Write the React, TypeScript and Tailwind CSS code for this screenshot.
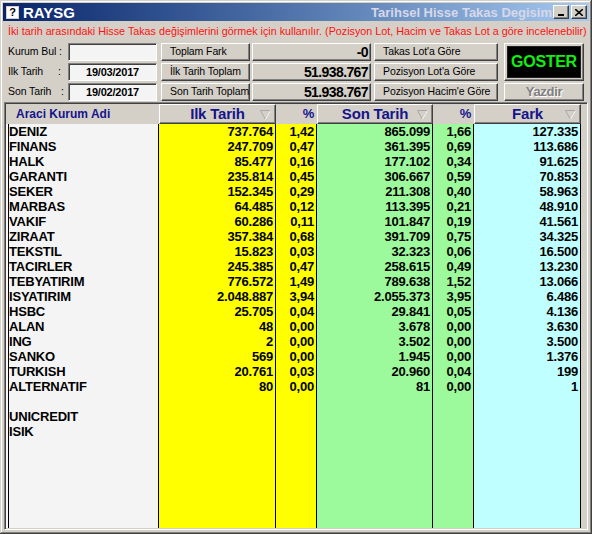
import React from 'react';

const raised =
  'border border-t-white border-l-white border-r-[#404040] border-b-[#404040] shadow-[inset_-1px_-1px_#808080]';
const sunken =
  'border border-t-[#808080] border-l-[#808080] border-r-white border-b-white shadow-[inset_1px_1px_#404040]';

type Row = [string, string, string, string, string, string];

const rows: Row[] = [
  ['DENIZ', '737.764', '1,42', '865.099', '1,66', '127.335'],
  ['FINANS', '247.709', '0,47', '361.395', '0,69', '113.686'],
  ['HALK', '85.477', '0,16', '177.102', '0,34', '91.625'],
  ['GARANTI', '235.814', '0,45', '306.667', '0,59', '70.853'],
  ['SEKER', '152.345', '0,29', '211.308', '0,40', '58.963'],
  ['MARBAS', '64.485', '0,12', '113.395', '0,21', '48.910'],
  ['VAKIF', '60.286', '0,11', '101.847', '0,19', '41.561'],
  ['ZIRAAT', '357.384', '0,68', '391.709', '0,75', '34.325'],
  ['TEKSTIL', '15.823', '0,03', '32.323', '0,06', '16.500'],
  ['TACIRLER', '245.385', '0,47', '258.615', '0,49', '13.230'],
  ['TEBYATIRIM', '776.572', '1,49', '789.638', '1,52', '13.066'],
  ['ISYATIRIM', '2.048.887', '3,94', '2.055.373', '3,95', '6.486'],
  ['HSBC', '25.705', '0,04', '29.841', '0,05', '4.136'],
  ['ALAN', '48', '0,00', '3.678', '0,00', '3.630'],
  ['ING', '2', '0,00', '3.502', '0,00', '3.500'],
  ['SANKO', '569', '0,00', '1.945', '0,00', '1.376'],
  ['TURKISH', '20.761', '0,03', '20.960', '0,04', '199'],
  ['ALTERNATIF', '80', '0,00', '81', '0,00', '1'],
  ['', '', '', '', '', ''],
  ['UNICREDIT', '', '', '', '', ''],
  ['ISIK', '', '', '', '', ''],
];

function SortArrow() {
  return (
    <svg width="11" height="11" viewBox="0 0 11 11" className="absolute right-[4px] top-[4px]">
      <path d="M0.5 1.5 H10.5 L5.5 10.5 Z" fill="none" stroke="#a8a8a8" strokeWidth="1" />
      <path d="M10.5 1.5 L5.5 10.5" fill="none" stroke="#ffffff" strokeWidth="1" />
    </svg>
  );
}

function Column({
  title,
  index,
  width,
  bg,
  sort,
}: {
  title: string;
  index: number;
  width: string;
  bg: string;
  sort?: boolean;
}) {
  return (
    <div className={`flex flex-col ${width}`}>
      {sort ? (
        <div
          className={`relative h-[20px] ${raised} flex items-center justify-center text-[15px] font-bold text-[#14148c]`}
        >
          {title}
          <SortArrow />
        </div>
      ) : (
        <div className="h-[20px] flex items-center justify-end pr-[3px] text-[13px] font-bold text-[#14148c]">
          {title}
        </div>
      )}
      <div className={`flex-1 ${bg} border-r border-black`}>
        {rows.map((r, i) => (
          <div key={i} className="h-[15px] leading-[15px] text-right pr-[2px]">
            {r[index]}
          </div>
        ))}
      </div>
    </div>
  );
}

function ValueBox({ value }: { value: string }) {
  return (
    <div
      className={`h-[18px] ${raised} flex items-center justify-end pr-[2px] text-[14px] font-bold tracking-[-0.6px]`}
    >
      {value}
    </div>
  );
}

function Btn({ label }: { label: string }) {
  return (
    <div className={`h-[18px] ${raised} flex items-center pl-[8px] whitespace-nowrap overflow-hidden`}>
      {label}
    </div>
  );
}

export default function App() {
  return (
    <div className="w-[592px] h-[534px] bg-[#d4d0c8] p-[3px] pb-[4px] flex flex-col overflow-hidden font-['Liberation_Sans',Arial,sans-serif] text-black shadow-[inset_-1px_-1px_#404040,inset_1px_1px_#d4d0c8,inset_-2px_-2px_#808080,inset_2px_2px_#ffffff]">
      {/* title bar */}
      <div className="h-[18px] flex items-center bg-gradient-to-r from-[#0a246a] to-[#a6caf0] pl-[3px] pr-[2px]">
        <div className="w-[13px] h-[13px] bg-[#d4d0c8] flex items-center justify-center">
          <div className="w-[11px] h-[11px] bg-white flex items-center justify-center text-[11px] font-bold leading-none">
            ?
          </div>
        </div>
        <span className="ml-[4px] text-white font-bold text-[15px] leading-none">RAYSG</span>
        <span className="ml-auto pr-[1px] whitespace-nowrap text-[#d8d8e8] font-bold text-[13px] leading-none">
          Tarihsel Hisse Takas Degisim
        </span>
        <div className={`w-[16px] h-[14px] bg-[#d4d0c8] ${raised} flex items-end justify-center pb-[2px]`}>
          <div className="w-[6px] h-[2px] bg-black" />
        </div>
        <div className={`ml-[2px] w-[16px] h-[14px] bg-[#d4d0c8] ${raised} flex items-center justify-center`}>
          <svg width="8" height="7" viewBox="0 0 8 7">
            <path d="M0 0 L8 7 M8 0 L0 7" stroke="black" strokeWidth="1.6" />
          </svg>
        </div>
      </div>

      {/* info line */}
      <div className="mt-[3px] pl-[5px] h-[14px] leading-[14px] text-[10.75px] text-[#ff1010] whitespace-nowrap">
        İki tarih arasındaki Hisse Takas değişimlerini görmek için kullanılır. (Pozisyon Lot, Hacim ve Takas Lot a göre incelenebilir)
      </div>

      {/* controls */}
      <div className="mt-[5px] flex text-[10.5px] tracking-[-0.1px] pl-[5px]">
        <div className="w-[60px] flex flex-col gap-[2px]">
          <div className="h-[18px] flex items-center">Kurum Bul :</div>
          <div className="h-[18px] flex items-center">
            <span className="w-[50px]">Ilk Tarih</span>:
          </div>
          <div className="h-[18px] flex items-center">
            <span className="w-[53px]">Son Tarih</span>:
          </div>
        </div>
        <div className="w-[89px] flex flex-col gap-[2px]">
          <div className={`h-[18px] ${sunken} bg-[#f4f4f4]`} />
          <div className={`h-[18px] ${sunken} bg-[#f4f4f4] flex items-center justify-center text-[11px] font-bold tracking-[-0.2px]`}>
            19/03/2017
          </div>
          <div className={`h-[18px] ${sunken} bg-[#f4f4f4] flex items-center justify-center text-[11px] font-bold tracking-[-0.2px]`}>
            19/02/2017
          </div>
        </div>
        <div className="ml-[4px] w-[89px] flex flex-col gap-[2px]">
          <Btn label="Toplam Fark" />
          <Btn label="İlk Tarih Toplam" />
          <Btn label="Son Tarih Toplam" />
        </div>
        <div className="ml-[2px] w-[119px] flex flex-col gap-[2px]">
          <ValueBox value="-0" />
          <ValueBox value="51.938.767" />
          <ValueBox value="51.938.767" />
        </div>
        <div className="ml-[3px] w-[124px] flex flex-col gap-[2px]">
          <Btn label="Takas Lot'a Göre" />
          <Btn label="Pozisyon Lot'a Göre" />
          <Btn label="Pozisyon Hacim'e Göre" />
        </div>
        <div className="ml-[6px] w-[80px] flex flex-col gap-[2px]">
          <div className={`h-[38px] ${raised} p-[2px]`}>
            <div className="h-full bg-black border border-[#202020] flex items-center justify-center text-[#10f010] font-bold text-[16px] tracking-[-0.3px]">
              GOSTER
            </div>
          </div>
          <div
            className={`h-[18px] ${raised} flex items-center justify-center text-[13px] font-bold tracking-[-0.3px] text-[#808080] [text-shadow:1px_1px_#ffffff]`}
          >
            Yazdir
          </div>
        </div>
      </div>

      {/* grid */}
      <div className={`mt-[1px] mx-[1px] flex-1 ${sunken} p-[1px] flex text-[13px] font-bold tracking-[-0.2px]`}>
        <div className="w-[153px] flex flex-col">
          <div className="h-[20px] flex items-center pl-[10px] text-[12px] font-bold tracking-normal text-[#14148c]">
            Araci Kurum Adi
          </div>
          <div className="flex-1 flex">
            <div className="w-[2px] bg-[#f8f8f8]" />
            <div className="flex-1 bg-[#f4f4f4] border-l border-black border-r">
              {rows.map((r, i) => (
                <div key={i} className="h-[15px] leading-[15px]">
                  {r[0]}
                </div>
              ))}
            </div>
          </div>
        </div>
        <Column title="Ilk Tarih" index={1} width="w-[117px]" bg="bg-[#ffff00]" sort />
        <Column title="%" index={2} width="w-[41px]" bg="bg-[#ffff00]" />
        <Column title="Son Tarih" index={3} width="w-[116px]" bg="bg-[#9cfa9c]" sort />
        <Column title="%" index={4} width="w-[41px]" bg="bg-[#9cfa9c]" />
        <Column title="Fark" index={5} width="w-[107px]" bg="bg-[#c0ffff]" sort />
      </div>
    </div>
  );
}
